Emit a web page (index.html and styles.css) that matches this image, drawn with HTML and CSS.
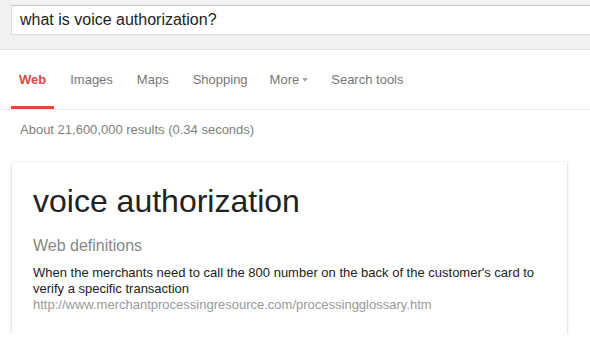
FILE: index.html
```html
<!DOCTYPE html>
<html lang="en">
<head>
    <meta charset="UTF-8">
    <meta name="viewport" content="width=device-width, initial-scale=1.0">
    <title>what is voice authorization? - Search</title>
    <link rel="stylesheet" href="styles.css">
</head>
<body>
    <div class="search-bar">
        <input type="text" class="search-input" value="what is voice authorization?" readonly>
    </div>

    <nav class="tabs">
        <a href="#" class="tab active">Web</a>
        <a href="#" class="tab">Images</a>
        <a href="#" class="tab">Maps</a>
        <a href="#" class="tab">Shopping</a>
        <a href="#" class="tab more">More <span class="caret"></span></a>
        <a href="#" class="tab">Search tools</a>
    </nav>

    <div class="stats">About 21,600,000 results (0.34 seconds)</div>

    <div class="card">
        <h1 class="term">voice authorization</h1>
        <h2 class="source">Web definitions</h2>
        <p class="definition">When the merchants need to call the 800 number on the back of the customer's card to verify a specific transaction</p>
        <a href="#" class="link">http://www.merchantprocessingresource.com/processingglossary.htm</a>
    </div>
</body>
</html>
```

FILE: styles.css
```css
body {
    font-family: "Liberation Sans", Arial, sans-serif;
    margin: 0;
    background-color: #fff;
    color: #222;
    overflow: hidden;
}

.search-bar {
    height: 50px;
    background-color: #f1f1f1;
    border-bottom: 1px solid #e5e5e5;
    padding: 5px 0 0 11px;
    box-sizing: border-box;
    overflow: hidden;
}

.search-input {
    display: block;
    width: 640px;
    height: 30px;
    box-sizing: border-box;
    margin: 0;
    padding: 0 8px;
    border: 1px solid #d9d9d9;
    border-top-color: #c6c6c6;
    background-color: #fff;
    font-family: inherit;
    font-size: 16px;
    color: #222;
    outline: none;
}

.tabs {
    display: flex;
    gap: 8px;
    padding-left: 11px;
    border-bottom: 1px solid #ebebeb;
}

.tab {
    display: flex;
    align-items: center;
    gap: 3px;
    height: 59px;
    box-sizing: border-box;
    padding: 3px 8px 0;
    border-bottom: 3px solid transparent;
    font-size: 13px;
    color: #777;
    text-decoration: none;
}

.tab.more {
    margin-left: -2px;
    margin-right: -1px;
}

.tab.active {
    color: #dd4b39;
    font-weight: bold;
    border-bottom-color: #dd4b39;
}

.caret {
    width: 0;
    height: 0;
    border-left: 3px solid transparent;
    border-right: 3px solid transparent;
    border-top: 4px solid #aaa;
    margin-top: 1px;
}

.stats {
    padding: 12px 0 0 20px;
    font-size: 13px;
    line-height: 16px;
    color: #808080;
}

.card {
    width: 555px;
    box-sizing: border-box;
    margin: 24px 0 0 12px;
    padding: 21px 21px 22px;
    background-color: #fff;
    box-shadow: 0 1px 3px rgba(0, 0, 0, 0.2), 0 0 1px rgba(0, 0, 0, 0.1);
}

.term {
    margin: 0;
    font-size: 32px;
    line-height: 36px;
    font-weight: normal;
    color: #222;
}

.source {
    margin: 17px 0 0;
    font-size: 16px;
    line-height: 20px;
    font-weight: normal;
    color: #878787;
}

.definition {
    margin: 9px 0 0;
    font-size: 13px;
    line-height: 16px;
    color: #222;
}

.link {
    display: block;
    font-size: 13px;
    line-height: 15px;
    color: #999;
    text-decoration: none;
}
```
